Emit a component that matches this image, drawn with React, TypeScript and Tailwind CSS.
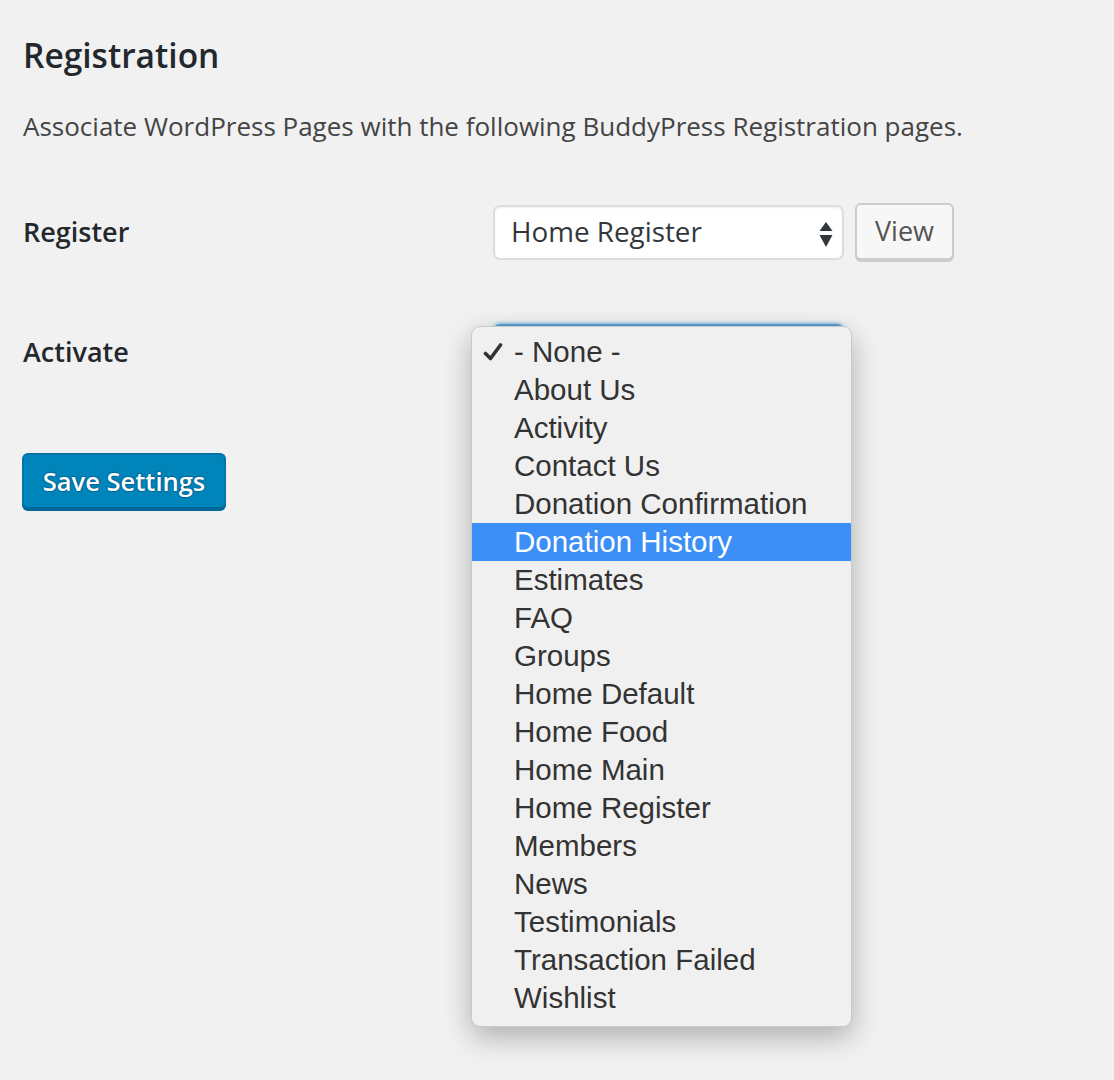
import React from "react";

const items = [
  "- None -",
  "About Us",
  "Activity",
  "Contact Us",
  "Donation Confirmation",
  "Donation History",
  "Estimates",
  "FAQ",
  "Groups",
  "Home Default",
  "Home Food",
  "Home Main",
  "Home Register",
  "Members",
  "News",
  "Testimonials",
  "Transaction Failed",
  "Wishlist",
];

function Arrows() {
  return (
    <svg width="14" height="26" viewBox="0 0 14 26" className="absolute right-[9px] top-[15px]">
      <polygon points="7,0 13.5,9 0.5,9" fill="#32373c" />
      <polygon points="0.5,13 13.5,13 7,25" fill="#32373c" />
    </svg>
  );
}

export default function App() {
  const os = { fontFamily: '"Open Sans", "Noto Sans", sans-serif' };
  return (
    <div className="min-h-[1080px] w-full bg-[#f1f1f1] pl-[23px] text-[#444]" style={os}>
      <h1 className="pt-[35px] text-[33.5px] font-semibold leading-[40px] text-[#23282d]">Registration</h1>
      <p className="mt-[33px] text-[26px] leading-[36px] text-[#444]">
        Associate WordPress Pages with the following BuddyPress Registration pages.
      </p>

      <div className="mt-[61px] flex items-center">
        <div className="mt-[-2px] w-[470px] text-[27px] font-semibold leading-[36px] text-[#23282d]">Register</div>
        <div className="relative h-[55px] w-[351px] rounded-[7px] border-2 border-[#ddd] bg-white shadow-[inset_0_1px_2px_rgba(0,0,0,0.07)]">
          <span className="absolute left-[16px] top-[6px] text-[27.8px] leading-[36px] text-[#32373c]">Home Register</span>
          <Arrows />
        </div>
        <button className="ml-[11px] mt-[-3px] h-[57px] w-[99px] rounded-[6px] border-2 border-[#ccc] bg-[#f7f7f7] text-[27px] leading-[36px] text-[#555] shadow-[0_2px_0_#ccc]">
          View
        </button>
      </div>

      <div className="mt-[64px] flex items-center">
        <div className="w-[470px] text-[27px] font-semibold leading-[36px] text-[#23282d]">Activate</div>
        <div className="relative h-[55px] w-[351px] rounded-[7px] border-2 border-[#5b9dd9] bg-white shadow-[0_0_4px_rgba(30,140,190,0.8)]">
          <div
            className="absolute left-[-24px] top-[0px] z-10 w-[381px] rounded-[9px] border border-[#c9c9c9] bg-[#f0f0f0] pb-[9px] pt-[6px] shadow-[0_10px_28px_rgba(0,0,0,0.28)]"
            style={{ fontFamily: '"Liberation Sans", Arial, sans-serif' }}
          >
            {items.map((it, i) => {
              const hl = it === "Donation History";
              return (
                <div
                  key={it}
                  className={`relative h-[38px] pl-[42px] text-[29.5px] leading-[38px] ${hl ? "bg-[#3b8ff6] text-white" : "text-[#333]"}`}
                >
                  {i === 0 && (
                    <svg width="20" height="20" viewBox="0 0 20 20" className="absolute left-[11px] top-[9px]">
                      <path d="M2.5 11.5 L7.5 16.5 L17.5 3" fill="none" stroke="#333" strokeWidth="3.6" strokeLinecap="round" strokeLinejoin="round" />
                    </svg>
                  )}
                  {it}
                </div>
              );
            })}
          </div>
        </div>
      </div>

      <button className="ml-[-1px] mt-[74px] h-[56px] w-[204px] rounded-[6px] border-2 border-[#0073aa] border-b-[#006799] bg-[#0085ba] text-[25.5px] font-semibold leading-[36px] text-white shadow-[0_2px_0_#006799] [text-shadow:0_-1px_1px_#006799,1px_0_1px_#006799,0_1px_1px_#006799,-1px_0_1px_#006799]">
        Save Settings
      </button>
    </div>
  );
}
